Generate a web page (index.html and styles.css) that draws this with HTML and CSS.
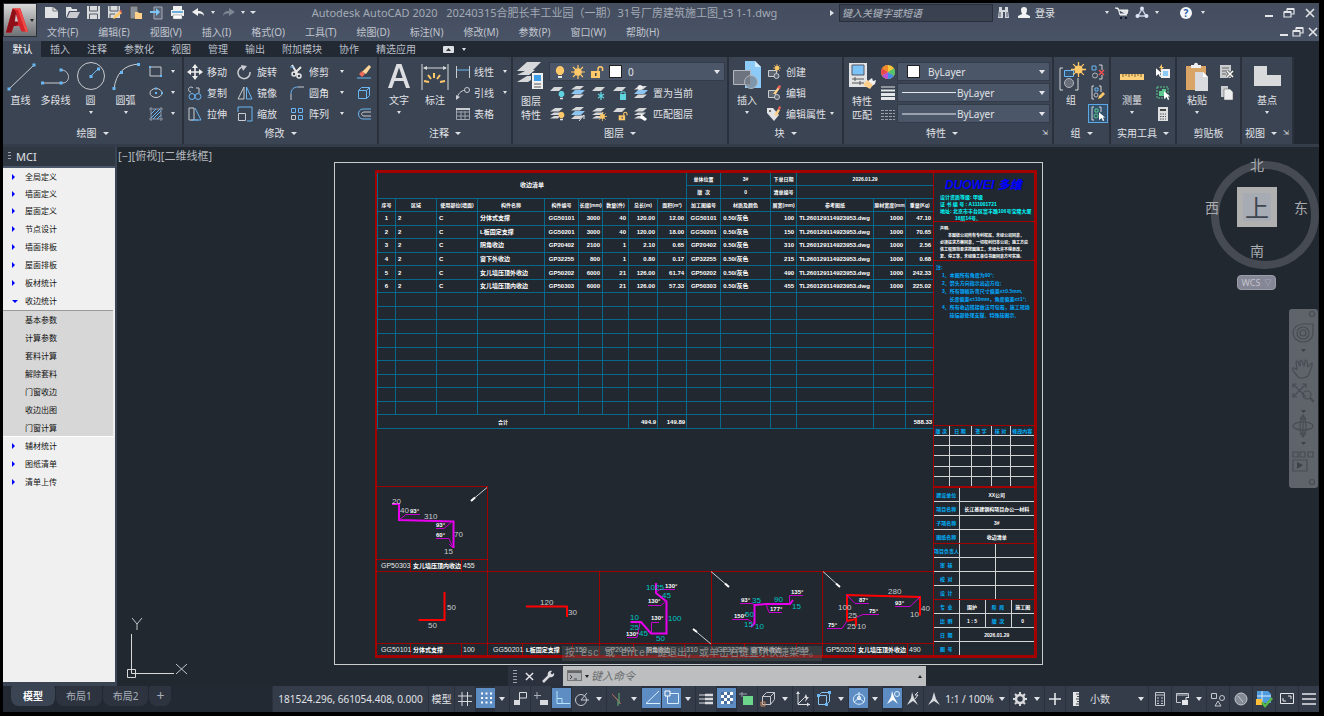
FILE: index.html
```html
<!DOCTYPE html>
<html lang="zh-CN">
<head>
<meta charset="utf-8">
<title>Autodesk AutoCAD 2020</title>
<link rel="stylesheet" href="styles.css">
</head>
<body>
<svg class="defs" aria-hidden="true">
  <symbol id="layers" viewBox="0 0 16 16"><path d="M6 2h8l-4 3.500H1zM5 6.500h8L10 9H1zM5 10h6L9 12.500H1z" fill="#d6d8da"/></symbol>
  <symbol id="layerblue" viewBox="0 0 16 16"><path d="M6 1h8l-4 3.500H1zM5 9.500h9L10 13H1z" fill="#d6d8da"/><path d="M5 5h10l-4 4H1z" fill="#8cc4f0"/></symbol>
  <symbol id="layerone" viewBox="0 0 16 16"><path d="M5 2h9l-4 4H1z" fill="#d6d8da"/></symbol>
  <symbol id="bulb" viewBox="0 0 12 14"><path d="M6 1a4.500 4.500 0 0 0-2 8.300V10h4v-.7A4.500 4.500 0 0 0 6 1z" fill="currentColor"/><path d="M4 11h4v2H4z" fill="#e8e8e8"/></symbol>
  <symbol id="sun" viewBox="0 0 14 14"><circle cx="7" cy="7" r="3.800" fill="#ffc869"/><path d="M7 0v14M0 7h14M2 2l10 10M12 2L2 12" stroke="#ffc869" stroke-width="1.200"/></symbol>
  <symbol id="lock" viewBox="0 0 14 14"><path d="M8 6V4a2.300 2.300 0 0 1 4.600 0v2" fill="none" stroke="currentColor" stroke-width="1.500"/><path d="M1 6h9v7H1z" fill="currentColor"/><path d="M5 8h1.500v3H5z" fill="#3b4453"/></symbol>
  <symbol id="cursor" viewBox="0 0 8 10"><path d="M0 0l7 6H4.500L6 9.500 4.500 10 3 6.700 0 9z" fill="#fff"/></symbol>
  <symbol id="restore" viewBox="0 0 12 10"><path d="M4 3V1h7v5H8.500M1 4h7v5H1z" fill="none" stroke="#e4e6ea" stroke-width="1.200"/><path d="M4 1h7M1 4h7" stroke="#e4e6ea" stroke-width="2"/></symbol>
  <symbol id="cross" viewBox="0 0 10 10"><path d="M1 1l8 8M9 1L1 9" stroke="#e4e6ea" stroke-width="1.600"/></symbol>
</svg>
<div class="app">
<header class="top">
  <button class="logo" aria-label="应用程序菜单"><svg width="22" height="27" viewBox="0 0 20 24"><path d="M6 1h7l7 21h-6l-2-5H7l-2 6H0z" fill="#d4232b"/><path d="M6 1l3 3 2 11-2 2H7l-2 6H0z" fill="#8f1018"/><path d="M9 6l2 7H8z" fill="#c9cacc"/><path d="M6 1h7l7 21-2 1L11 3z" fill="#f04b46"/></svg><i class="caret dark"></i></button>
  <div class="toprows">
    <div class="titlebar">
      <div class="qat">
        <button aria-label="新建"><svg width="15" height="15"><path d="M1 2h8l5 4v7H1z" fill="#e1e2e4"/><path d="M9 2v4h5" stroke="#777" fill="none"/></svg></button>
        <button aria-label="打开"><svg width="15" height="15"><path d="M1 2h5l1 2h5v2H4L1 13z" fill="#e1e2e4"/><path d="M5 7h10l-3 6H2z" fill="#c9cbcf"/></svg></button>
        <button aria-label="保存"><svg width="15" height="15"><path d="M1 1h13v13H1z" fill="#d9dadc"/><path d="M3.500 1v5h8V1M3.500 14V9h8v5" fill="none" stroke="#555c69"/></svg></button>
        <button aria-label="另存为"><svg width="15" height="15"><path d="M1 1h12v12H1z" fill="#d9dadc"/><path d="M3 1v5h8V1M3 13V9h5" fill="none" stroke="#555c69"/><path d="M6 14l1-3 6-5 2 2-6 5z" fill="#ffc869"/><path d="M12 6l2-1 1 2-1 1z" fill="#e25a55"/></svg></button>
        <button aria-label="从移动设备打开"><svg width="15" height="15"><path d="M2 1h8v13H2z" fill="#8a8f98" stroke="#444"/><path d="M7 7h3l1 1h3v6H7z" fill="#ffd08a"/></svg></button>
        <button aria-label="保存到移动设备"><svg width="15" height="15"><path d="M5 2h8v12H5z" fill="#5a6472" stroke="#aab"/><path d="M1 6h6V3l4 4-4 4V8H1z" fill="#7cc4f5"/></svg></button>
        <button aria-label="打印"><svg width="15" height="15"><path d="M3 1h9v4H3zM1 5h13v6H1z" fill="#f0f0f0"/><path d="M2 6h11v2H2z" fill="#6aaede"/><path d="M3 10h9v4H3z" fill="#fff" stroke="#777" stroke-width=".5"/></svg></button>
        <button aria-label="放弃"><svg width="15" height="15"><path d="M1 7l6-4v3c4 0 6 2 6 5-1-2-3-2.500-6-2.500V11z" fill="#f0f0f0"/></svg></button>
        <i class="caret"></i>
        <button aria-label="重做"><svg width="15" height="15"><path d="M14 7L8 3v3c-4 0-6 2-6 5 1-2 3-2.500 6-2.500V11z" fill="#7d8592"/></svg></button>
        <i class="caret"></i><i class="caret bar"></i>
      </div>
      <div class="doctitle">Autodesk AutoCAD 2020 &nbsp; 20240315合肥长丰工业园（一期）31号厂房建筑施工图_t3 1-1.dwg</div>
      <i class="play"></i>
      <input class="search" type="text" placeholder="键入关键字或短语" aria-label="搜索">
      <div class="account">
        <svg width="14" height="14"><path d="M2 1h3v3h3V1h3v3l1 8H8V6H6v6H1l1-8z" fill="#d5d8dd"/><path d="M3 6v5M10 6v5" stroke="#454e60"/></svg>
        <svg width="14" height="14"><path d="M7 1a3 3 0 0 1 3 3c0 2-1 3-1 4l4 2v2H1v-2l4-2c0-1-1-2-1-4a3 3 0 0 1 3-3z" fill="#f2f2f2"/></svg>
        <button class="login">登录</button>
      </div>
      <div class="services"><i class="caret"></i>
        <svg width="14" height="14"><path d="M0 2h3l2 7h7M4 4h9l-1 4H5" fill="#dfe3e8" stroke="#f2f2f2"/><path d="M5 11h2v2H5zM10 11h2v2h-2z" fill="#10182c"/></svg>
        <svg width="14" height="14"><path d="M7 3l4 7H3z" fill="none" stroke="#c5cee0" stroke-width="1.500"/><circle cx="7" cy="2.500" r="2" fill="#dbe5f5"/><circle cx="2.500" cy="10" r="2" fill="#dbe5f5"/><circle cx="11.500" cy="10" r="2" fill="#dbe5f5"/></svg>
        <i class="caret"></i></div>
      <button class="help" aria-label="帮助">?</button><i class="caret"></i>
      <div class="winctl"><button aria-label="最小化"><i class="min"></i></button><button aria-label="还原"><svg width="12" height="10"><use href="#restore"/></svg></button><button aria-label="关闭"><svg width="10" height="10"><use href="#cross"/></svg></button></div>
    </div>
    <div class="menubar">
      <nav class="menus"><button>文件(F)</button><button>编辑(E)</button><button>视图(V)</button><button>插入(I)</button><button>格式(O)</button><button>工具(T)</button><button>绘图(D)</button><button>标注(N)</button><button>修改(M)</button><button>参数(P)</button><button>窗口(W)</button><button>帮助(H)</button></nav>
      <div class="winctl docctl"><button aria-label="最小化文档"><i class="min"></i></button><button aria-label="还原文档"><svg width="12" height="10"><use href="#restore"/></svg></button><button aria-label="关闭文档"><svg width="10" height="10"><use href="#cross"/></svg></button></div>
    </div>
  </div>
</header>
<nav class="tabs"><button class="active">默认</button><button>插入</button><button>注释</button><button>参数化</button><button>视图</button><button>管理</button><button>输出</button><button>附加模块</button><button>协作</button><button>精选应用</button><button class="toggle" aria-label="最小化功能区"><svg width="11" height="7"><rect width="11" height="7" rx="1" fill="#dcdfe3"/><path d="M3 5l2.500-3L8 5z" fill="#333"/></svg></button><i class="caret"></i></nav>

<section class="ribbon">
  <div class="panel p-draw">
    <div class="body">
      <button class="big"><svg width="32" height="32"><path d="M4 28L29 4" stroke="#c9ccd1"/><path d="M2.500 26.500h3v3h-3zM27.500 2.500h3v3h-3z" fill="#6ab7f5"/></svg><span>直线</span></button>
      <button class="big"><svg width="32" height="32"><path d="M3 22h20c8-1 7-12-1-13" stroke="#c9ccd1" fill="none"/><path d="M1 20.500h3v3H1zM19.500 20.500h3v3h-3zM19.500 7.500h3v3h-3z" fill="#6ab7f5"/></svg><span>多段线</span></button>
      <button class="big"><svg width="32" height="32"><circle cx="16" cy="15" r="13.500" stroke="#c9ccd1" fill="none"/><path d="M16 15l7-7" stroke="#6ab7f5"/><path d="M14.500 14h3v3h-3zM22 6.500h3v3h-3z" fill="#6ab7f5"/></svg><span>圆</span><i class="caret"></i></button>
      <button class="big"><svg width="32" height="32"><path d="M4 28C6 12 14 4 29 3" stroke="#c9ccd1" fill="none"/><path d="M2.500 26h3v3h-3zM10 10h3v3h-3zM27 2h3v3h-3z" fill="#6ab7f5"/></svg><span>圆弧</span><i class="caret"></i></button>
      <div class="col">
        <button class="sm" aria-label="矩形"><svg width="16" height="16"><path d="M2 3h11v9H2z" stroke="#c9ccd1" fill="none"/><path d="M1 2h2v2H1zM12 11h2v2h-2z" fill="#6ab7f5"/></svg><i class="caret"></i></button>
        <button class="sm" aria-label="椭圆"><svg width="16" height="16"><ellipse cx="8" cy="8" rx="6" ry="4.500" stroke="#c9ccd1" fill="none"/><path d="M7 7h2v2H7zM13 7h2v2h-2zM7 2.500h2v2H7z" fill="#6ab7f5"/></svg><i class="caret"></i></button>
        <button class="sm" aria-label="图案填充"><svg width="16" height="16"><path d="M3 1v14M13 1v14M1 3h14M1 13h14" stroke="#8f96a1"/><path d="M3 8l5-5M3 12l9-9M5 13l8-8M9 13l4-4" stroke="#6ab7f5"/></svg><i class="caret"></i></button>
      </div>
    </div>
    <h2>绘图 <i class="caret wide"></i></h2>
  </div>
  <div class="panel p-modify">
    <div class="body">
      <div class="col">
        <button class="sm"><svg width="16" height="16"><path d="M8 2v12M2 8h12" stroke="#eee" stroke-width="1.600"/><path d="M8 0l3 4H5zM8 16l3-4H5zM0 8l4-3v6zM16 8l-4-3v6z" fill="#eee"/></svg><span>移动</span></button>
        <button class="sm"><svg width="16" height="16"><path d="M4 7a2.500 2.500 0 1 1 2-4M9 3h3v5" stroke="#c9ccd1" fill="none"/><circle cx="5" cy="11.500" r="3" stroke="#6ab7f5" fill="none"/><circle cx="11" cy="11.500" r="3" stroke="#6ab7f5" fill="none"/></svg><span>复制</span></button>
        <button class="sm"><svg width="16" height="16"><path d="M2 2h5v12H2z" stroke="#c9ccd1" fill="none"/><path d="M8 2l6 12H8M4 14h7" stroke="#6ab7f5" fill="none"/></svg><span>拉伸</span></button>
      </div>
      <div class="col">
        <button class="sm"><svg width="16" height="16"><path d="M5 3a6 6 0 1 0 8 5" stroke="#c9ccd1" stroke-width="1.500" fill="none"/><path d="M4 1l6 1-4 5z" fill="#c9ccd1"/></svg><span>旋转</span></button>
        <button class="sm"><svg width="16" height="16"><path d="M7 2v12H1z" stroke="#c9ccd1" fill="none"/><path d="M9.500 2v12H15z" stroke="#6ab7f5" fill="none"/></svg><span>镜像</span></button>
        <button class="sm"><svg width="16" height="16"><path d="M1 6V1h14v14H10" stroke="#6ab7f5" fill="none"/><path d="M1.500 7.500h7v7h-7z" stroke="#c9ccd1" fill="none"/></svg><span>缩放</span></button>
      </div>
      <div class="col">
        <button class="sm"><svg width="16" height="16"><path d="M3 1l6 10M12 3L6 9" stroke="#e8e8e8" stroke-width="2"/><circle cx="10" cy="12" r="2" stroke="#e8e8e8" stroke-width="1.500" fill="none"/><circle cx="5" cy="10" r="2" stroke="#e8e8e8" stroke-width="1.500" fill="none"/><path d="M1 3h4" stroke="#6ab7f5"/></svg><span>修剪</span><i class="caret"></i></button>
        <button class="sm"><svg width="16" height="16"><path d="M2 15V9" stroke="#c9ccd1"/><path d="M2 9c0-5 3-7 7-7" stroke="#6ab7f5" fill="none"/><path d="M9 2h6" stroke="#c9ccd1"/></svg><span>圆角</span><i class="caret"></i></button>
        <button class="sm"><svg width="16" height="16"><path d="M2.500 2.500h4v4h-4zM9.500 2.500h4v4h-4z M9.500 9.500h4v4h-4z" stroke="#6ab7f5" fill="none"/><path d="M2.500 9.500h4v4h-4z" stroke="#c9ccd1" fill="none"/></svg><span>阵列</span><i class="caret"></i></button>
      </div>
      <div class="col">
        <button class="sm" aria-label="删除"><svg width="16" height="16"><path d="M6 8l7-7 2 2-5 7z" fill="#ffd699"/><path d="M3 10l3-3 3 3-3 3z" fill="#f06a5a"/><path d="M1 14h14" stroke="#6ab7f5"/></svg></button>
        <button class="sm" aria-label="分解"><svg width="16" height="16"><path d="M2.500 5.500h8v8h-8zM2.500 5.500l3-3h8v8l-3 3M10.500 5.500l3-3" stroke="#6ab7f5" fill="none"/></svg></button>
        <button class="sm" aria-label="偏移"><svg width="16" height="16"><path d="M15 3H7c-6 0-6 10 0 10h8" stroke="#6ab7f5" fill="none"/><path d="M15 6H8c-3 0-3 4 0 4h7" stroke="#c9ccd1" fill="none"/></svg></button>
      </div>
    </div>
    <h2>修改 <i class="caret wide"></i></h2>
  </div>
  <div class="panel p-note">
    <div class="body">
      <button class="big"><svg width="32" height="32"><path d="M13.500 3h5L27 27h-4l-2.500-7h-9L9 27H5zM16 6.500L12.600 17h7z" fill="#dcdee1"/></svg><span>文字</span><i class="caret"></i></button>
      <button class="big"><svg width="32" height="32"><path d="M3 3v26M29 3v26M5 7h22" stroke="#d6d8da"/><path d="M4 7l4-2v4zM28 7l-4-2v4z" fill="#d6d8da"/><path d="M15 12v5M9 14l3 4M21 14l-3 4M5 20l5 1M26 20l-5 1" stroke="#ffc869" stroke-width="2"/></svg><span>标注</span></button>
      <div class="col">
        <button class="sm"><svg width="16" height="16"><path d="M1.500 2v12M14.500 2v12" stroke="#c9ccd1"/><path d="M2 6h12" stroke="#6ab7f5"/></svg><span>线性</span><i class="caret"></i></button>
        <button class="sm"><svg width="16" height="16"><path d="M2 14c1-6 4-8 8-9" stroke="#c9ccd1" fill="none"/><circle cx="12" cy="5" r="2.500" stroke="#c9ccd1" fill="none"/><path d="M1 15l0-5 4 2z" fill="#c9ccd1"/></svg><span>引线</span><i class="caret"></i></button>
        <button class="sm"><svg width="16" height="16"><path d="M1.500 2.500h13v11h-13zM1 6h14M1 10h14M6 5v9M10 5v9" stroke="#9ea4ad" fill="none"/><path d="M1 2h14v2H1z" fill="#c9ccd1"/></svg><span>表格</span></button>
      </div>
    </div>
    <h2>注释 <i class="caret wide"></i></h2>
  </div>
  <div class="panel p-layer">
    <div class="body">
      <button class="big tall"><svg width="32" height="32"><path d="M12 1h14l-9 9H2zM12 9h8l-6 5H2zM12 15h4v4l-3 2H2z" fill="#d6d8da"/><path d="M17 12h11v16H17z" fill="#f0f0f0"/><path d="M19 14h7v6h-7z" fill="#3f9ee8"/><path d="M19 23h7M19 26h7" stroke="#555"/></svg><span>图层<br>特性</span></button>
      <div class="col grow">
        <div class="combo layercombo"><svg width="12" height="14" class="gold"><use href="#bulb"/></svg><svg width="14" height="14"><use href="#sun"/></svg><svg width="14" height="14" class="gold"><use href="#lock"/></svg><i class="swatch"></i><select aria-label="图层"><option>0</option></select></div>
        <div class="toolrow">
          <button aria-label="关"><svg width="16" height="16"><use href="#layerone"/><svg x="8" y="5" width="9" height="10" class="teal"><use href="#bulb"/></svg></svg></button>
          <button aria-label="隔离"><svg width="16" height="16"><use href="#layerblue"/></svg></button>
          <button aria-label="冻结"><svg width="16" height="16"><use href="#layerone"/><path d="M10 7v8M7 9l6 4M13 9l-6 4" stroke="#5fd4e0" stroke-width="1.300"/></svg></button>
          <button aria-label="锁定"><svg width="16" height="16"><use href="#layerone"/><path d="M9 9V7h4v2" stroke="#5fd4e0" fill="none"/><path d="M8 9h6v6H8z" fill="#5fd4e0"/></svg></button>
          <button><svg width="16" height="16"><use href="#layerblue"/><circle cx="7" cy="2.500" r="2.500" fill="#eee"/></svg><span>置为当前</span></button>
        </div>
        <div class="toolrow">
          <button aria-label="打开所有图层"><svg width="16" height="16"><use href="#layers"/><svg x="8" y="5" width="9" height="10" class="gold"><use href="#bulb"/></svg></svg></button>
          <button aria-label="取消隔离"><svg width="16" height="16"><use href="#layerblue"/><path d="M9 15l5-6M14 9v4" stroke="#e8e8e8" fill="none"/></svg></button>
          <button aria-label="解冻"><svg width="16" height="16"><use href="#layers"/><svg x="7" y="6" width="9" height="9"><use href="#sun"/></svg></svg></button>
          <button aria-label="解锁"><svg width="16" height="16"><use href="#layerone"/><svg x="6" y="5" width="10" height="10" class="gold"><use href="#lock"/></svg></svg></button>
          <button><svg width="16" height="16"><use href="#layers"/><path d="M8 8l6 5-2 2-5-3z" fill="#fff"/></svg><span>匹配图层</span></button>
        </div>
      </div>
    </div>
    <h2>图层 <i class="caret wide"></i></h2>
  </div>
  <div class="panel p-block">
    <div class="body">
      <button class="big"><svg width="32" height="32"><path d="M14 0h10l6 6v21H14z" fill="#8ccbf8"/><path d="M24 0v6h6" fill="#d2ecff"/><path d="M2.500 9.500h17v14h-17z" fill="#6d747f" stroke="#b3b7bd"/><circle cx="20" cy="21" r="6.500" fill="#77808c" fill-opacity=".7" stroke="#b3b7bd"/></svg><span>插入</span><i class="caret"></i></button>
      <div class="col">
        <button class="sm"><svg width="16" height="16"><path d="M2.500 6.500h8v6h-8z" fill="#5c6470" stroke="#c9ccd1"/><circle cx="10.500" cy="12" r="2.500" fill="#5c6470" stroke="#c9ccd1"/><svg x="7" y="0" width="8" height="8"><use href="#sun"/></svg></svg><span>创建</span></button>
        <button class="sm"><svg width="16" height="16"><path d="M2.500 5.500h7v7h-7z" fill="#5c6470" stroke="#c9ccd1"/><circle cx="11" cy="12" r="2.500" fill="#5c6470" stroke="#c9ccd1"/><path d="M7 9l5-7 2 1-4 6z" fill="#ffd08a"/><path d="M11 3l2-3 2 1-1 3z" fill="#ee6157"/></svg><span>编辑</span></button>
        <button class="sm"><svg width="16" height="16"><path d="M1 2h6l6 7-5 6-7-8z" fill="#e2e3e5"/><circle cx="4" cy="5" r="1" fill="#444"/><path d="M8 9l4-6 2 1-3 6z" fill="#ffd08a"/><path d="M12 3l1-3 2 1-1 3z" fill="#ee6157"/></svg><span>编辑属性</span><i class="caret"></i></button>
      </div>
    </div>
    <h2>块 <i class="caret wide"></i></h2>
  </div>
  <div class="panel p-props">
    <div class="body">
      <button class="big tall"><svg width="32" height="32"><path d="M3 2h18v24H3z" fill="#e3e4e6"/><path d="M6 4h12v10H6z" fill="#7cc4f8" stroke="#556"/><path d="M6 18h12M6 22h12M9 16v4M14 20v4" stroke="#555"/><path d="M20 18l2 2 4-3 1 3 3-1-1 4-3 2-6-5z" fill="#f2f2f2"/><path d="M17 24l4-5 6 5-3 4z" fill="#ffd08a"/></svg><span>特性<br>匹配</span></button>
      <div class="col grow">
        <div class="proprow"><svg width="16" height="16"><circle cx="8" cy="8" r="7" fill="#f7c53c"/><path d="M8 8V1a7 7 0 0 0-6 3.500z" fill="#f28b2c"/><path d="M8 8L2 4.500a7 7 0 0 0 0 7z" fill="#e84a4a"/><path d="M8 8l-6 3.500A7 7 0 0 0 8 15z" fill="#b653d8"/><path d="M8 8v7a7 7 0 0 0 6-3.500z" fill="#3f8fe8"/><path d="M8 8l6 3.500a7 7 0 0 0 0-7z" fill="#52c46a"/></svg><div class="combo"><i class="swatch"></i><select aria-label="对象颜色"><option>ByLayer</option></select></div></div>
        <div class="proprow"><svg width="16" height="16"><path d="M1 2h14" stroke="#e5e6e8"/><path d="M1 5.500h14" stroke="#e5e6e8" stroke-width="2"/><path d="M1 9.500h14M1 13.500h14" stroke="#e5e6e8" stroke-width="3"/></svg><div class="combo"><i class="line"></i><select aria-label="线宽"><option>ByLayer</option></select></div></div>
        <div class="proprow"><svg width="16" height="16"><path d="M1 4.500h14M1 7.500h14M1 10.500h14M1 13.500h14" stroke="#9aa0aa" stroke-dasharray="3 1"/></svg><div class="combo"><i class="line thick"></i><select aria-label="线型"><option>ByLayer</option></select></div></div>
      </div>
    </div>
    <h2>特性 <i class="caret wide"></i><i class="launch">⇲</i></h2>
  </div>
  <div class="panel p-group">
    <div class="body">
      <button class="big"><svg width="32" height="32"><path d="M8 7H5v22h3M20 29h3V17" stroke="#d6d8da" fill="none"/><path d="M9.500 9.500h9v6h-9z" fill="#34516d" stroke="#6ab7f5"/><circle cx="14" cy="22" r="4.500" fill="#69707c" stroke="#b3b7bd"/><svg x="16" y="1" width="15" height="15"><use href="#sun"/></svg></svg><span>组</span></button>
      <div class="col">
        <button class="sm" aria-label="解除编组"><svg width="16" height="16"><path d="M2 2h4v4H2z" stroke="#6ab7f5" fill="none"/><circle cx="5" cy="11.500" r="2.500" stroke="#b3b7bd" fill="none"/><path d="M9 1h3v5M12 11v4H9" stroke="#d6d8da" fill="none"/><path d="M9 6l5 5M14 6l-5 5" stroke="#f0504f" stroke-width="1.500"/></svg></button>
        <button class="sm" aria-label="组编辑"><svg width="16" height="16"><path d="M4 1H2v13h2M9 1h2v6" stroke="#d6d8da" fill="none"/><path d="M5 3h3v3H5z" stroke="#6ab7f5" fill="none"/><circle cx="6" cy="10" r="2" stroke="#b3b7bd" fill="none"/><path d="M8 14l1-3 4-4 2 2-4 4z" fill="#ffc869"/></svg></button>
        <button class="sm chosen" aria-label="启用组选择"><svg width="16" height="16"><path d="M4 1H2v13h2M9 1h2v5" stroke="#d6d8da" fill="none"/><path d="M5 3h3v3H5z" stroke="#5bc88c" fill="none"/><circle cx="6" cy="10" r="2" stroke="#5bc88c" fill="none"/><svg x="9" y="6" width="7" height="9"><use href="#cursor"/></svg></svg></button>
      </div>
    </div>
    <h2>组 <i class="caret wide"></i></h2>
  </div>
  <div class="panel p-util">
    <div class="body">
      <button class="big"><svg width="32" height="32"><path d="M4 13h24v6H4z" fill="#ffd17a"/><path d="M7 13v3M10 13v2M13 13v3M16 13v2M19 13v3M22 13v2M25 13v3" stroke="#7c6436"/></svg><span>测量</span><i class="caret"></i></button>
      <div class="col">
        <button class="sm" aria-label="快速选择"><svg width="16" height="16"><path d="M6 5h9v9H6z" fill="#f0f0f0"/><path d="M8 7h5v5H8z" fill="#8ccbf8"/><path d="M7 0L4 4h2L5 7l4-4H7z" fill="#ffc869"/><svg x="1" y="4" width="7" height="9"><use href="#cursor"/></svg></svg></button>
        <button class="sm" aria-label="全部选择"><svg width="16" height="16"><path d="M2 2h11v11H2z" fill="none" stroke="#5bc88c" stroke-dasharray="2 1"/><path d="M4 6h3V4h4v7H4z" fill="#5bc88c"/><svg x="9" y="6" width="7" height="9"><use href="#cursor"/></svg></svg></button>
        <button class="sm" aria-label="计算器"><svg width="16" height="16"><path d="M3 1h10v14H3z" fill="#dedfe1"/><path d="M5 3h6v2H5z" fill="#444"/><path d="M5 8h6M5 10.500h6M5 13h6" stroke="#555" stroke-dasharray="1.500 1"/></svg></button>
      </div>
    </div>
    <h2>实用工具 <i class="caret wide"></i></h2>
  </div>
  <div class="panel p-clip">
    <div class="body">
      <button class="big"><svg width="32" height="32"><path d="M5 5h20v24H5z" fill="#d9a566"/><path d="M10 7V4h3c0-3 4-3 4 0h3v3z" fill="#f0f0f0"/><path d="M14 11h8l5 5v14H14z" fill="#d9dbde"/><path d="M22 11v5h5z" fill="#fff"/></svg><span>粘贴</span><i class="caret"></i></button>
      <div class="col">
        <button class="sm" aria-label="剪切"><svg width="16" height="16"><path d="M1 1h11v13H1z" fill="#c9cbce"/><path d="M3 4h7M3 7h5M3 10h4" stroke="#666"/><path d="M8 7l6 6M14 7l-6 6" stroke="#444" stroke-width="3"/><path d="M8 7l6 6M14 7l-6 6" stroke="#fff" stroke-width="1.500"/></svg></button>
        <button class="sm" aria-label="复制裁剪"><svg width="16" height="16"><path d="M2 1h7v11H2z" fill="#c9ccd1"/><path d="M5 4h6l3 3v8H5z" fill="#eceded" stroke="#555" stroke-width=".5"/></svg></button>
      </div>
    </div>
    <h2>剪贴板</h2>
  </div>
  <div class="panel p-view">
    <div class="body"><button class="big"><svg width="32" height="32"><path d="M3 5h13v9h14v11H3z" fill="#d9dadc"/></svg><span>基点</span><i class="caret"></i></button></div>
    <h2>视图 <i class="caret wide"></i><i class="launch">⇲</i></h2>
  </div>
</section>

<main class="workspace">
  <aside class="palette">
    <h2><i class="grip"></i>MCI</h2>
    <ul class="tree">
      <li>全局定义</li><li>墙面定义</li><li>屋面定义</li><li>节点设计</li><li>墙面排板</li><li>屋面排板</li><li>板材统计</li>
      <li class="open">收边统计</li>
      <li class="sub"><ul><li>基本参数</li><li>计算参数</li><li>套料计算</li><li>解除套料</li><li>门窗收边</li><li>收边出图</li><li>门窗计算</li></ul></li>
      <li>辅材统计</li><li>图纸清单</li><li>清单上传</li>
    </ul>
  </aside>
  <div class="canvas">
    <div class="viewlabel">[−][俯视][二维线框]</div>
    <div class="sheet"><div class="frame">
      <div class="leftpart">
        <table class="parts">
          <colgroup><col style="width:18px"><col style="width:41px"><col style="width:41px"><col style="width:67px"><col style="width:34px"><col style="width:24px"><col style="width:26px"><col style="width:29px"><col style="width:29px"><col style="width:34px"><col style="width:50px"><col style="width:26px"><col style="width:77px"><col style="width:32px"><col style="width:28px"></colgroup>
          <tr class="meta"><th colspan="9" rowspan="2">收边清单</th><th>单体位置</th><th>3#</th><th>下单日期</th><th colspan="3">2026.01.29</th></tr>
          <tr class="meta"><th>版&nbsp; 次</th><th>0</th><th>清单编号</th><th colspan="3"></th></tr>
          <tr><th>序号</th><th>区域</th><th>使用部位(墙面)</th><th>构件名称</th><th>构件编号</th><th>长度(mm)</th><th>数量(件)</th><th>总长(m)</th><th>面积(m²)</th><th>加工图编号</th><th>材质及颜色</th><th>展宽(mm)</th><th>参考图纸</th><th>原材宽度(mm)</th><th>重量(Kg)</th></tr>
          <tr><td>1<td>2<td>C<td>分体式支撑<td>GG50101<td>3000<td>40<td>120.00<td>12.00<td>GG50101<td>0.50/灰色<td>100<td>TL260129114923953.dwg<td>1000<td>47.10</tr>
          <tr><td>2<td>2<td>C<td>L板固定支撑<td>GG50201<td>3000<td>40<td>120.00<td>18.00<td>GG50201<td>0.50/灰色<td>150<td>TL260129114923953.dwg<td>1000<td>70.65</tr>
          <tr><td>3<td>2<td>C<td>阴角收边<td>GP20402<td>2100<td>1<td>2.10<td>0.65<td>GP20402<td>0.50/灰色<td>310<td>TL260129114923953.dwg<td>1000<td>2.56</tr>
          <tr><td>4<td>2<td>C<td>窗下外收边<td>GP32255<td>800<td>1<td>0.80<td>0.17<td>GP32255<td>0.50/灰色<td>215<td>TL260129114923953.dwg<td>1000<td>0.68</tr>
          <tr><td>5<td>2<td>C<td>女儿墙压顶外收边<td>GP50202<td>6000<td>21<td>126.00<td>61.74<td>GP50202<td>0.50/灰色<td>490<td>TL260129114923953.dwg<td>1000<td>242.33</tr>
          <tr><td>6<td>2<td>C<td>女儿墙压顶内收边<td>GP50303<td>6000<td>21<td>126.00<td>57.33<td>GP50303<td>0.50/灰色<td>455<td>TL260129114923953.dwg<td>1000<td>225.02</tr>
          <tr><td><td><td><td><td><td><td><td><td><td><td><td><td><td><td></tr>
          <tr><td><td><td><td><td><td><td><td><td><td><td><td><td><td><td></tr>
          <tr><td><td><td><td><td><td><td><td><td><td><td><td><td><td><td></tr>
          <tr><td><td><td><td><td><td><td><td><td><td><td><td><td><td><td></tr>
          <tr><td><td><td><td><td><td><td><td><td><td><td><td><td><td><td></tr>
          <tr><td><td><td><td><td><td><td><td><td><td><td><td><td><td><td></tr>
          <tr><td><td><td><td><td><td><td><td><td><td><td><td><td><td><td></tr>
          <tr><td><td><td><td><td><td><td><td><td><td><td><td><td><td><td></tr>
          <tr><td><td><td><td><td><td><td><td><td><td><td><td><td><td><td></tr>
          <tr class="total"><th colspan="7">合计</th><td>494.9</td><td>149.89</td><td></td><td></td><td></td><td></td><td></td><td>588.33</td></tr>
        </table>
        <svg class="profiles" viewBox="377 429 556 225">
          <g class="rl"><path d="M377 486.500H487.500V571.500M377 559.500H487.500M410.500 559.500V571.500M461.500 559.500V571.500M377 571.500H933M377 643.500H933M487.500 571.500V655M599.500 571.500V655M711.500 571.500V655M822.500 571.500V655M410.500 643.500V655M461.500 643.500V655M522.500 643.500V655M572.500 643.500V655M633.500 643.500V655M684.500 643.500V655M744.500 643.500V655M796.500 643.500V655M855.500 643.500V655M907.500 643.500V655"/></g>
          <g class="arrow"><path d="M487 487.500L471 501M711 644L693 629M711 571.500L729 587M823 571.500L840 587"/><path class="tip" d="M475 497.500l-4 3.500M697 632l-4-3M725 583.500l4 3.500M836 583.500l4 3.500"/></g>
          <g class="red"><path d="M418.500 620H444.500V592M526 606.500H567V617M847 621V595L920 597V615.500M847 621L856 619V626"/></g>
          <g class="mag"><path d="M392 504H399V520L453.500 521.500V548M656 583V593L666.500 601.500V633.500H651L641 622H630.500M751 627L754.500 623V605L766 604H790l3-4"/></g>
          <g class="leader"><path d="M399 520L406 514.500H420M436 528.500H444L453 521M436 538.500H449L453 548l-4-4M656 592L660 589.500H675M648 605.500H661L666 601M651.500 633V622.500H659M627 637.500H637L640 623M740 603.500H752L755 605M789.500 604V595.500H803M766 604L769 612.500H782M732 619.500H748L752 622M847 595L855 603.500H869M895 606.500H910L920 597M857 617L863 614.500H879M827 628.500H842L847 621"/></g>
          <g class="dim"><text x="392" y="504">20</text><text x="400" y="513">40</text><text x="424" y="519">310</text><text x="454" y="537">70</text><text x="444" y="554">15</text><text x="447" y="610">50</text><text x="428" y="628">50</text><text x="540" y="605">120</text><text x="568" y="615">30</text><text x="888" y="594">280</text><text x="838" y="610">100</text><text x="848" y="618">25</text><text x="847" y="629">25</text><text x="857" y="629">10</text><text x="910" y="617">10</text><text x="921" y="611">40</text></g>
          <g class="dim cy"><text x="646" y="590">10</text><text x="655" y="590">25</text><text x="662" y="598">45</text><text x="668" y="621">100</text><text x="656" y="641">50</text><text x="630" y="620">10</text><text x="630" y="630">25</text><text x="639" y="636">45</text><text x="752" y="603">35</text><text x="774" y="602">90</text><text x="792" y="609">15</text><text x="745" y="617">50</text><text x="744" y="627">15</text><text x="755" y="629">10</text></g>
          <g class="ang"><text x="410" y="513">93°</text><text x="436" y="527">93°</text><text x="436" y="537">60°</text><text x="665" y="588">130°</text><text x="648" y="603">130°</text><text x="651" y="620">130°</text><text x="626" y="636">130°</text><text x="741" y="602">93°</text><text x="791" y="594">135°</text><text x="770" y="611">177°</text><text x="734" y="618">150°</text><text x="859" y="602">87°</text><text x="895" y="605">93°</text><text x="869" y="613">75°</text><text x="828" y="627">75°</text></g>
          <g class="tag"><text x="381" y="568">GP50303</text><text x="413" y="568" class="cn">女儿墙压顶内收边</text><text x="463" y="568">455</text>
          <text x="381" y="652">GG50101</text><text x="413" y="652" class="cn">分体式支撑</text><text x="463" y="652">100</text>
          <text x="493" y="652">GG50201</text><text x="526" y="652" class="cn">L板固定支撑</text><text x="575" y="652">150</text>
          <text x="605" y="652">GP20402</text><text x="646" y="652" class="cn">阴角收边</text><text x="686" y="652">310</text>
          <text x="717" y="652">GP32255</text><text x="751" y="652" class="cn">窗下外收边</text><text x="797" y="652">215</text>
          <text x="826" y="652">GP50202</text><text x="858" y="652" class="cn">女儿墙压顶外收边</text><text x="909" y="652">490</text></g>
        </svg>
      </div>
      <div class="titleblock">
        <div class="firm"><div class="brand">DUOWEI 多维</div><p>设计资质等级: 甲级<br>证 书 编 号 : A111001721<br>地址: 北京市丰台区富丰路106号宝隆大厦<br>&emsp;&emsp;&emsp;16层14号。</p></div>
        <p class="notice">声明:<br>&emsp;&emsp;本图纸公司所有专利权属，未经公司同意，<br>必须征求方案同意，一切权利归本公司；施工方应<br>依工程规范要求按图施工，未经允许不得更改，<br>复、停工等，未经施工单位书面同意方可实施。</p>
        <div class="remarks">注:<ol><li>1、本图所有角度为90°;</li><li>2、箭头方向指示出边方位;</li><li>3、所有钢板折弯尺寸偏差≤±0.5mm,<br>&emsp;&ensp;长度偏差≤±10mm，角度偏差≤±1°;</li><li>4、所有收边搭接做法可包覆，施工现场<br>&emsp;&ensp;按端部处理支撑。特殊按图示。</li></ol></div>
        <table class="revs"><colgroup><col style="width:15px"><col style="width:22px"><col style="width:20px"><col style="width:19px"><col></colgroup>
          <tr><th>版 次<th>日 期<th>签 字<th>核 对<th>修改内容</tr><tr><td><td><td><td><td></tr><tr><td><td><td><td><td></tr><tr><td><td><td><td><td></tr><tr><td><td><td><td><td></tr><tr><td><td><td><td><td></tr></table>
        <table class="info"><colgroup><col style="width:25px"><col style="width:26px"><col style="width:10px"><col style="width:16px"><col></colgroup>
          <tr><th>建设单位</th><td colspan="4">XX公司</td></tr>
          <tr><th>项目名称</th><td colspan="4">长江基建钢构项目办公—材料</td></tr>
          <tr><th>子项名称</th><td colspan="4">3#</td></tr>
          <tr><th>图纸名称</th><td colspan="4">收边清单</td></tr>
          <tr class="redtop"><th>项目负责人</th><td colspan="2"></td><td colspan="2"></td></tr>
          <tr><th>审&ensp;核</th><td colspan="2"></td><td colspan="2"></td></tr>
          <tr><th>校&ensp;对</th><td colspan="2"></td><td colspan="2"></td></tr>
          <tr><th>设&ensp;计</th><td colspan="2"></td><td colspan="2"></td></tr>
          <tr class="redtop"><th>专&ensp;业</th><td>围护</td><th colspan="2">阶&ensp;段</th><td>施工图</td></tr>
          <tr><th>比&ensp;例</th><td>1 : 5</td><th colspan="2">版&ensp;次</th><td>0</td></tr>
          <tr><th>日&ensp;期</th><td colspan="4">2026.01.29</td></tr>
          <tr><th>图&ensp;号</th><td colspan="4"></td></tr>
        </table>
      </div>
    </div></div>
    <svg class="ucs" width="66" height="64"><path d="M9.500 16V55.500H52M5.500 51.500h8v8h-8z" stroke="#d8d8d8" fill="none"/><path d="M10 0l5 6 5-6M15 6v6" stroke="#c4c6c8" fill="none"/><path d="M54 46l11 10M65 46L54 56" stroke="#c4c6c8"/></svg>
    <div class="compass"><span class="n">北</span><span class="w">西</span><button>上</button><span class="e">东</span><span class="s">南</span></div>
    <button class="wcs">WCS <span>▽</span></button>
    <div class="navbar"><svg width="28" height="178" viewBox="0 0 28 178"><g fill="none" stroke="#484c53" stroke-width="1.200"><circle cx="23" cy="5" r="2.500"/><path d="M14 15h10v10a10 9 0 1 1-10-10z"/><circle cx="14" cy="24" r="6"/><circle cx="14" cy="24" r="3"/><path d="M9 68c-3-4-7-7-5-9 2-1 4 3 4 1 0-3-2-8 0-8s2 5 3 5-1-6 1-6 2 6 3 6 0-6 2-6 1 7 2 7 2-4 4-4c1 3-2 7-3 11-1 4-9 5-11 3zM4 75l13 13M17 75L4 88M4 79v-4h4M13 75h4v4M4 84v4h4"/><circle cx="18" cy="86" r="4"/><path d="M21 89l4 4" stroke-width="2"/><path d="M14 107v20M11 110l3-4 3 4M11 124l3 4 3-4"/><ellipse cx="14" cy="117" rx="10" ry="4"/><ellipse cx="14" cy="117" rx="3" ry="8"/><path d="M4 143h5v5H4zM11 143h5v5h-5zM19 143h5v5h-5zM4 151h14v11H4z"/><circle cx="23" cy="173" r="2.500"/></g><path d="M12 40h5l-2.500 3zM12 101h5l-2.500 3zM12 133h5l-2.500 3zM8 153l6 3-6 4z" fill="#3d4148"/></svg></div>
    <div class="hint">按 Esc 或 Enter 键退出, 或单击右键显示快捷菜单。</div>
    <div class="command"><i class="grip"></i><button aria-label="关闭命令行"><svg width="9" height="9" viewBox="0 0 10 10"><use href="#cross"/></svg></button><button aria-label="自定义"><svg width="13" height="13"><path d="M1 12l6-6" stroke="#d8dade" stroke-width="2.500"/><path d="M6 6c-1-3 1-6 4-5L8.500 3l1.500 1.500L12 3c1 3-2 5-5 4z" fill="#d8dade"/></svg></button><label><svg width="16" height="12"><rect x=".5" y=".5" width="14" height="10" fill="#aeb1b4" stroke="#777"/><path d="M1 2h13" stroke="#666" stroke-width="2"/><path d="M3 5l2 2-2 2M7 9h3" stroke="#444" fill="none"/></svg><i class="caret dark"></i><input type="text" placeholder="键入命令" aria-label="键入命令"><i class="caret dark up"></i></label></div>
  </div>
</main>

<footer class="status">
  <nav class="layouts"><button class="active">模型</button><button>布局1</button><button>布局2</button><button class="plus">+</button></nav>
  <div class="coords">181524.296, 661054.408, 0.000</div>
  <button class="model">模型</button>
  <button class="i" aria-label="栅格"><svg width="16" height="16"><path d="M5 1v14M10.500 1v14M1 5h14M1 10.500h14" stroke="#d8dade"/></svg></button>
  <button class="i on" aria-label="捕捉"><svg width="16" height="16"><path d="M3 3.500h11M3 8h11M3 12.500h11" stroke="#fff" stroke-width="2" stroke-dasharray="2 2.500"/></svg></button><i class="c"></i>
  <button class="i" aria-label="推断约束"><svg width="16" height="16"><path d="M2 9h6v5H2z" fill="#d8dade"/><path d="M7.500 9V1.500h7V7h-7" stroke="#d8dade" fill="none"/></svg></button>
  <button class="i" aria-label="动态输入"><svg width="16" height="16"><path d="M4 1v7M1 4.500h7" stroke="#aab0b8"/><path d="M7 9h8v5H7z" fill="#d8dade"/></svg></button>
  <button class="i on" aria-label="正交"><svg width="16" height="16"><path d="M3 1v12.500h13M3 8.500h5V14" stroke="#b5e2ff" fill="none"/></svg></button>
  <button class="i" aria-label="极轴追踪"><svg width="16" height="16"><circle cx="7" cy="9" r="5.500" stroke="#c4c8ce" fill="none"/><path d="M7 9h8M7 9l6-7" stroke="#c4c8ce"/></svg></button><i class="c"></i>
  <button class="i" aria-label="等轴测草图"><svg width="16" height="16"><path d="M3 3l6 6v6" stroke="#5fae72" fill="none"/><path d="M3 3l9 10" stroke="#b4575a"/><path d="M10 2v11" stroke="#5fae72"/></svg></button><i class="c"></i>
  <button class="i on" aria-label="对象捕捉追踪"><svg width="16" height="16"><path d="M15 1L2 13.500h14" stroke="#d9efff" fill="none"/></svg></button>
  <button class="i on" aria-label="对象捕捉"><svg width="16" height="16"><path d="M3.500 3.500h11v10h-11z" stroke="#d9efff" fill="none"/><path d="M1 1h5v5H1z" stroke="#fff" fill="#5e8dc4"/></svg></button><i class="c"></i>
  <button class="i" aria-label="线宽"><svg width="16" height="16"><path d="M1 4h6M1 8h6M1 12h6" stroke="#d8dade"/><path d="M7 4h8M7 8h8M7 12h8" stroke="#d8dade" stroke-width="2.500"/></svg></button>
  <button class="i on" aria-label="透明度"><svg width="16" height="16"><path d="M2 2h12v12H2z" fill="#fff"/><path d="M2 3.500h12M2 9.500h12" stroke="#4a6f9c" stroke-width="3" stroke-dasharray="3 3"/><path d="M5 6.500h9M5 12.500h9" stroke="#4a6f9c" stroke-width="3" stroke-dasharray="3 3"/></svg></button>
  <button class="i" aria-label="选择循环"><svg width="16" height="16"><path d="M0 3h8M3 1v5" stroke="#9aa1ab"/><path d="M4 5h10v9H4z" fill="#6bd68c"/></svg></button>
  <button class="i" aria-label="三维对象捕捉"><svg width="16" height="16"><path d="M2.500 5.500h8v8h-8zM2.500 5.500l4-4h8v7l-4 5M10.500 5.500l4-4" stroke="#c4c8ce" fill="none"/><path d="M1 11h4v4H1z" stroke="#d08a5a" fill="none"/></svg></button><i class="c"></i>
  <button class="i" aria-label="动态 UCS"><svg width="16" height="16"><path d="M3 1v12.500h12M3 13l6-6" stroke="#d8dade" fill="none"/><path d="M3 0l2 3H1zM15 13.500l-3-2v4zM11 3l-2 4h2l-1 4 4-5h-2z" fill="#d8dade"/></svg></button>
  <button class="i" aria-label="选择过滤"><svg width="16" height="16"><path d="M2.500 4.500h8v9h-8zM2.500 4.500l3-3h8v9l-3 3" stroke="#8cc4f0" fill="none"/><path d="M1 3h3v3H1zM12 0h3v3h-3zM9 12h3v3H9z" fill="#6ab7f5"/></svg></button><i class="c"></i>
  <button class="i on" aria-label="小控件"><svg width="16" height="16"><path d="M8 2v6l-5 4M8 8l5 4M3 12c-2-4 1-8 5-8s7 4 5 8c-3 3-7 3-10 0z" stroke="#d9efff" fill="none"/><circle cx="8" cy="8" r="1.500" stroke="#fff" fill="none"/></svg></button><i class="c"></i>
  <button class="i on" aria-label="注释可见性"><svg width="16" height="16"><path d="M7 1l2 6 4 7-5-4-6 4 4-7z" fill="#fff"/><circle cx="12" cy="4" r="2.500" stroke="#d9efff" fill="none"/></svg></button>
  <button class="i" aria-label="自动缩放"><svg width="16" height="16"><path d="M7 1l2 6 4 7-5-4-6 4 4-7z" fill="#d8dade"/><path d="M13 1l-3 3h3l-3 4" stroke="#d8dade" fill="none"/></svg></button>
  <button class="i" aria-label="注释比例图标"><svg width="16" height="16"><path d="M8 1l2 7 4 6-6-4-6 4 4-6z" fill="#d8dade"/></svg></button>
  <button class="scale">1:1 / 100%</button><i class="c"></i>
  <button class="i" aria-label="切换工作空间"><svg width="16" height="16"><circle cx="8" cy="8" r="4" stroke="#d8dade" stroke-width="2.500" fill="none"/><path d="M8 1v3M8 12v3M1 8h3M12 8h3M3 3l2 2M11 11l2 2M13 3l-2 2M5 11l-2 2" stroke="#d8dade" stroke-width="2"/></svg></button><i class="c"></i>
  <button class="i" aria-label="注释监视器"><svg width="16" height="16"><path d="M8 2v12M2 8h12" stroke="#e4e6ea" stroke-width="1.600"/></svg></button>
  <button class="i" aria-label="标尺"><svg width="16" height="16"><path d="M5 1h6v14H5z" fill="#e4e6ea"/><path d="M8 3h3M9 5.500h2M8 8h3M9 10.500h2M8 13h3" stroke="#444"/></svg></button>
  <div class="units"><select aria-label="单位"><option>小数</option></select><i class="c"></i></div>
  <button class="i w" aria-label="快捷特性"><svg width="16" height="16"><path d="M3.500 1.500h9v13h-9zM3 4h10M5 7h2M9 7h2M5 10h2M9 10h2M5 12.500h2M9 12.500h2" stroke="#c4c8ce" fill="none"/></svg></button>
  <button class="i" aria-label="锁定用户界面"><svg width="16" height="16"><path d="M7 11.500H2.500v-9h12V6M2 4h12" stroke="#c4c8ce" fill="none"/><path d="M8 9h6v5H8z" fill="#e4e6ea"/><path d="M12 9V6.500h3" stroke="#e4e6ea" fill="none"/></svg></button><i class="c"></i>
  <button class="i w" aria-label="隔离对象"><svg width="16" height="16"><path d="M1.500 2.500h5v5h-5zM5 15l3-5 3 5z" stroke="#c4c8ce" fill="none"/><circle cx="12" cy="7" r="2.500" stroke="#c4c8ce" fill="none"/></svg></button>
  <button class="i w" aria-label="图形性能"><svg width="16" height="16"><circle cx="8" cy="8" r="6" fill="#858b94" stroke="#c4c8ce"/><path d="M5 5l5 6" stroke="#c4c8ce"/></svg></button>
  <button class="i w" aria-label="安全加载"><svg width="18" height="18"><path d="M2 1h11l3 3v9H2z" fill="#4f9be0"/><path d="M7 1v12M2 6h14" stroke="#d9ecff"/><path d="M1 9h6v6H1z" fill="#ffbe3a"/><path d="M7 12l3 4 7-8" stroke="#55b848" stroke-width="2.500" fill="none"/></svg></button>
  <button class="i w" aria-label="全屏显示"><svg width="16" height="16"><path d="M1.500 2.500h13v10h-13z" stroke="#e4e6ea" fill="none"/><path d="M9 5h3v3M7 10H4V7" stroke="#e4e6ea" fill="none"/></svg></button>
  <button class="i" aria-label="自定义"><svg width="16" height="16"><path d="M1 3h14M1 8h14M1 13h14" stroke="#e4e6ea" stroke-width="1.500"/></svg></button>
</footer>
</div>
</body>
</html>
```
FILE: styles.css
```css
* { box-sizing: border-box; }
html, body { height: 100%; margin: 0; }
body { background: #000; padding: 3px 5px 4px 3px; color: #e0e2e6; font: 10px/12px "Noto Sans", "Noto Sans CJK SC", sans-serif; overflow: hidden; }
button { background: none; border: 0; padding: 0; margin: 0; color: inherit; font: inherit; display: inline-flex; align-items: center; justify-content: center; white-space: nowrap; }
select, input { background: none; border: 0; padding: 0; margin: 0; color: inherit; font: inherit; appearance: none; outline: 0; min-width: 0; }
h2, p, ul, ol { margin: 0; padding: 0; font: inherit; list-style: none; }
svg { display: block; flex: none; }
.defs { position: absolute; width: 0; height: 0; }
.app { height: 100%; display: flex; flex-direction: column; background: #222933; }

.caret { display: inline-block; flex: none; width: 0; height: 0; border: 2px solid transparent; border-top: 3px solid #dfe2e6; border-bottom: 0; }
.caret.wide { border-width: 3px 3px 0; }
.caret.dark { border-top-color: #222; }
.caret.up { transform: rotate(180deg); }
.caret.bar { border-width: 3px 3px 0; box-shadow: 0 -4px 0 -2px #dfe2e6; }

/* title and menus */
.top { display: flex; height: 38px; background: linear-gradient(#444d5e, #495366); flex: none; }
.logo { width: 34px; height: 34px; gap: 2px; background: linear-gradient(#d9d9d9, #6d7074); border: 1px solid #2b3039; }
.toprows { flex: 1; display: flex; flex-direction: column; min-width: 0; }
.titlebar { display: flex; align-items: center; height: 19px; gap: 3px; }
.qat { display: flex; align-items: center; gap: 5px; margin-left: 6px; width: 216px; }
.qat button { width: 16px; }
.doctitle { flex: 1; text-align: center; color: #a3aab6; font-size: 11px; line-height: 18px; white-space: nowrap; }
.play { border: 3px solid transparent; border-left: 4px solid #dfe2e6; border-right: 0; margin-right: 2px; }
.search { width: 154px; height: 18px; background: #3a4252; border: 1px solid #2a303b; font-style: italic; padding-left: 2px; }
.search::placeholder { color: #b3b8c1; opacity: 1; }
.account { display: flex; align-items: center; gap: 6px; width: 104px; margin-left: 1px; }
.login { margin-left: -2px; }
.services { display: flex; align-items: center; gap: 6px; margin-left: 1px; }
.help { width: 12px; height: 12px; border-radius: 50%; background: #f4f6fa; color: #2b5ba8; font-weight: 700; margin: 0 6px 0 18px; }
.winctl { display: flex; align-items: center; gap: 10px; margin: 0 4px 0 57px; }
.winctl .min { width: 8px; height: 2px; background: #e4e6ea; margin-top: 7px; }
.menubar { display: flex; height: 19px; align-items: center; justify-content: space-between; color: #c0c5ce; }
.menus { display: flex; gap: 20px; margin-left: 10px; }
.docctl { gap: 4px; margin: 0 1px; }

.tabs { display: flex; height: 16px; align-items: stretch; background: #222933; color: #b9bec7; flex: none; }
.tabs button { padding: 0 8px 0 9px; }
.tabs .active { width: 38px; background: #3b4453; color: #fff; }
.tabs .toggle { margin-left: 10px; }
.tabs .caret { align-self: center; }

/* ribbon */
.ribbon { display: flex; height: 90px; background: #222933; border-bottom: 3px solid #343c49; flex: none; overflow: hidden; }
.panel { display: flex; flex-direction: column; background: #3b4453; border-right: 2px solid #2a313d; flex: none; }
.panel .body { display: flex; height: 67px; padding-top: 4px; }
.panel h2 { display: flex; align-items: center; justify-content: center; gap: 6px; height: 18px; }
.launch { font-size: 7px; font-style: normal; margin-left: auto; }
.p-draw { width: 181px; } .p-modify { width: 195px; } .p-note { width: 134px; } .p-layer { width: 216px; } .p-block { width: 115px; }
.p-props { width: 210px; } .p-group { width: 57px; } .p-util { width: 66px; } .p-clip { width: 65px; } .p-view { width: 52px; }
.p-props h2 { padding-left: 82px; padding-right: 4px; }
.p-view h2 { padding: 0 3px; }
.big { display: flex; flex-direction: column; justify-content: flex-start; gap: 1px; width: 36px; height: 63px; flex: none; }
.big .caret { margin-top: 4px; }
.big.tall span { line-height: 14px; }
.col { display: flex; flex-direction: column; }
.col.grow { flex: 1; padding-right: 2px; }
.sm { display: flex; justify-content: flex-start; height: 21px; gap: 5px; }
.p-draw .big { width: 35px; }
.p-draw .col { margin-left: 5px; }
.p-draw .sm { gap: 7px; }
.p-modify .body { padding-left: 3px; gap: 10px; }
.p-modify .col + .col + .col { margin-left: 2px; }
.p-modify .sm, .p-block .sm { gap: 4px; }
.p-modify .sm .caret { margin-left: 7px; }
.p-modify .col:last-child { margin-left: 0; }
.p-note .body { padding-left: 2px; }
.p-note .sm { gap: 3px; } .p-note .sm .caret { margin-left: 6px; }
.p-note .col { margin-left: 2px; }
.p-layer .toolrow { display: flex; height: 21px; gap: 5px; }
.p-layer .toolrow button { gap: 4px; }
.p-block .col { margin-left: 1px; }
.p-group .sm, .p-util .sm, .p-clip .sm { width: 20px; justify-content: center; }
.p-group .big { width: 34px; }
.p-util .big { width: 42px; } .p-clip .big { width: 40px; } .p-view .big { width: 50px; }
.chosen { border: 1px solid #5aa9e6; background: #34516d; height: 19px; margin-top: 1px; }
.combo { display: flex; align-items: center; flex: 1; height: 19px; background: #4b5769; border: 1px solid #333b48; padding: 0 4px; }
.combo::after { content: ""; border: 3px solid transparent; border-top: 4px solid #e4e6ea; border-bottom: 0; }
.combo select { flex: 1; font-size: 10px; line-height: 16px; }
.layercombo { gap: 5px; margin: 1px 0; flex: none; }
.swatch { width: 13px; height: 13px; background: #fff; border: 1px solid #222; flex: none; margin-right: 1px; }
.proprow { display: flex; align-items: center; height: 21px; gap: 1px; }
.proprow .swatch { margin: 0 8px 0 5px; }
.line { width: 54px; height: 1px; background: #e4e6ea; margin-right: 1px; }
.line.thick { height: 2px; background: #9aa2ae; }
.gold { color: #ffc869; } .teal { color: #5fd4e0; }

/* workspace */
.workspace { flex: 1; display: flex; min-height: 0; background: #3b4453; }
.palette { width: 112px; margin: 0 2px 4px 0; display: flex; flex-direction: column; background: #f0f0f0; flex: none; }
.palette h2 { display: flex; align-items: center; height: 21px; padding: 0 5px; background: #2f3743; border-bottom: 2px solid #4b586a; font-size: 11px; gap: 5px; flex: none; }
.grip { width: 3px; height: 9px; background: repeating-linear-gradient(#9aa1ab 0 1px, transparent 1px 3px); }
.tree { color: #111; font-size: 8px; line-height: 18px; font-family: "Noto Sans CJK SC", sans-serif; }
.tree li { height: 18px; padding-left: 22px; position: relative; }
.tree > li:not(.sub)::before { content: ""; position: absolute; left: 9px; top: 6px; border: 3px solid transparent; border-left: 3px solid #00f; border-right: 0; }
.tree > li.open::before { border: 3px solid transparent; border-top: 3px solid #00f; border-bottom: 0; top: 8px; }
.tree > .sub { height: auto; padding: 0; margin-right: 2px; background: #d7d7d7; border-top: 1px solid #999; border-bottom: 1px solid #fff; }
.tree > li:nth-child(-n+2), .sub li:last-child { height: 17px; }
.canvas { flex: 1; position: relative; overflow: hidden; background: #212830; }
.viewlabel { padding: 2px 1px; color: #b4b8be; font-size: 11px; line-height: 14px; }

/* drawing sheet on the model canvas */
.sheet { position: absolute; left: 217px; top: 15px; width: 709px; height: 503px; border: 1px solid #c9cbcd; padding: 7px 5px 6px 40px; color: #fff; font: 700 6px/7px "Liberation Sans", "Noto Sans CJK SC", sans-serif; }
.frame { height: 100%; display: flex; border: 3px solid #a50000; border-left-width: 2px; }
.leftpart { width: 556px; flex: none; display: flex; flex-direction: column; }
.frame table { border-collapse: collapse; table-layout: fixed; width: 100%; }
.parts { height: 256px; flex: none; }
.parts th, .parts td { border: 1px solid #06698c; padding: 0 2px; line-height: 6px; white-space: nowrap; overflow: hidden; font-weight: 700; }
.parts tr { height: 13px; } .parts .meta { height: 12px; }
.parts tr:first-child > * { border-top: 0; }
.parts th { font-size: 5px; padding: 0; text-align: center; }
.parts .meta th:first-child[rowspan] { font-size: 6px; }
.parts td { text-align: right; }
.parts td:nth-child(1), .parts td:nth-child(5), .parts td:nth-child(10) { text-align: center; }
.parts td:nth-child(2), .parts td:nth-child(3), .parts td:nth-child(4), .parts td:nth-child(11), .parts td:nth-child(13) { text-align: left; }
.parts .total td { text-align: right; padding: 0 1px; }
.profiles { width: 100%; height: auto; overflow: visible; }
.profiles path { fill: none; }
.rl { stroke: #a00000; shape-rendering: crispEdges; } .arrow { stroke: #d0d0d0; } .arrow .tip { stroke: #fff; stroke-width: 2; }
.red { stroke: #f00; stroke-width: 2; } .mag { stroke: #e800ee; stroke-width: 2; } .leader { stroke: #c800ce; }
.dim { fill: #c9cccf; font-size: 8px; font-weight: 400; } .dim.cy { fill: #00c4c4; }
.ang { fill: #fff; font-size: 6px; } .tag { fill: #e8e8e8; font-size: 7px; font-weight: 400; } .tag .cn { font-size: 6px; font-weight: 700; fill: #fff; }
.titleblock { flex: 1; display: flex; flex-direction: column; border-left: 1px solid #a50000; min-width: 0; }
.firm { height: 49px; border-bottom: 1px solid #a50000; color: #0ff; font-size: 5px; line-height: 7px; padding: 5px 0 0 6px; white-space: nowrap; }
.brand { color: #00f; font: italic 900 12px/14px "Liberation Sans", "Noto Sans CJK SC", sans-serif; margin: 0 0 2px 5px; }
.notice { height: 39px; border-bottom: 1px solid #a50000; font-size: 4px; line-height: 7px; padding: 3px 0 0 6px; white-space: nowrap; }
.remarks { flex: 1; color: #00aaff; font-size: 5px; line-height: 8px; padding: 2px 0 0 2px; white-space: nowrap; }
.remarks ol { padding-left: 6px; }
.revs, .info { flex: none; text-align: center; }
.revs { height: 62px; }
.revs tr { height: 10px; }
.revs tr > *, .info tr > * { border: 1px solid #d2d4d6; padding: 0; line-height: 6px; font-size: 5px; white-space: nowrap; overflow: hidden; }
.revs tr:first-child > *, .info tr:first-child > *, .info .redtop > * { border-top: 1px double #a50000; }
.revs tr:last-child > *, .info tr:has(+ .redtop) > * { border-bottom: 1px double #a50000; }
.revs th, .info th { color: #00b4ff; }
.revs tr > :first-child, .info tr > :first-child { border-left: 0; }
.revs tr > :last-child, .info tr > :last-child { border-right: 0; }
.info tr:last-child > * { border-bottom: 0; }
.info { height: 168px; }

.ucs { position: absolute; left: 5px; bottom: 4px; }
.compass { position: absolute; right: 16px; top: 11px; width: 92px; height: 98px; display: flex; align-items: center; justify-content: center; font: 14px/16px "Noto Sans CJK SC", sans-serif; color: #a9abaf; }
.compass::before { content: ""; position: absolute; left: 0; top: 3px; width: 92px; height: 92px; border: 8px solid #464a53; border-radius: 50%; }
.compass button { width: 40px; height: 40px; background: #a7abb3; border: 6px solid #b0b0b0; color: #3f4650; font-size: 24px; line-height: 24px; z-index: 1; }
.compass span { position: absolute; }
.compass .n { top: -2px; } .compass .s { bottom: -2px; } .compass .w { left: -6px; } .compass .e { right: -5px; }
.wcs { position: absolute; right: 43px; top: 128px; width: 39px; height: 15px; border-radius: 4px; background: #858796; color: #c3c4cc; border: 1px solid #9a9ca8; font-size: 9px; gap: 4px; }
.wcs span { font-size: 7px; }
.navbar { position: absolute; right: 1px; top: 162px; width: 29px; height: 179px; background: #5f636a; border-radius: 3px; }
.hint { position: absolute; left: 445px; bottom: 25px; padding: 1px 3px; background: rgba(90, 90, 90, .4); color: #8a8a8a; font: 10px/13px "Liberation Mono", "Noto Sans CJK SC", monospace; white-space: nowrap; }
.command { position: absolute; left: 391px; bottom: 0; width: 418px; height: 20px; display: flex; align-items: center; background: #2b323e; gap: 8px; padding-left: 5px; }
.command .grip { width: 4px; height: 13px; }
.command label { flex: 1; height: 20px; background: #bdbebf; display: flex; align-items: center; gap: 2px; padding: 0 4px; }
.command input { flex: 1; font-style: italic; font-size: 11px; }
.command input::placeholder { color: #6b6d70; opacity: 1; }

/* status bar */
.status { height: 26px; display: flex; align-items: stretch; background: #222933; flex: none; }
.status > button, .status > .c, .coords, .units { background: #343c4a; border-left: 1px solid #2a313c; }
.layouts { display: flex; align-items: flex-start; margin-right: auto; padding-left: 8px; color: #a9afb9; }
.layouts button { height: 20px; padding: 0 10px; background: #2d3440; border-radius: 2px 2px 8px 8px; border-right: 1px solid #222933; }
.layouts .active { background: #3b4453; color: #fff; font-weight: 700; padding: 0 12px; }
.layouts .plus { font-size: 14px; padding: 0 7px; }
.coords { width: 156px; display: flex; align-items: center; justify-content: center; white-space: nowrap; }
.status .model { width: 26px; }
.status .i { width: 21px; flex: none; }
.status .i.w { width: 23px; }
.status .on { width: 20px; background: #5e8dc4; border: 1px solid #2a313c; border-width: 2px 0 4px 1px; }
.c { width: 14px; display: flex; align-items: center; justify-content: center; flex: none; }
.status > .c { border-left: 0; }
.c::before { content: ""; border: 3px solid transparent; border-top: 4px solid #dfe2e6; border-bottom: 0; }
.status .scale { width: 51px; border-left: 0; }
.units { width: 62px; display: flex; align-items: center; border-left: 0; padding-left: 4px; }
.units select { flex: 1; }
.units .c { height: 26px; }
```
